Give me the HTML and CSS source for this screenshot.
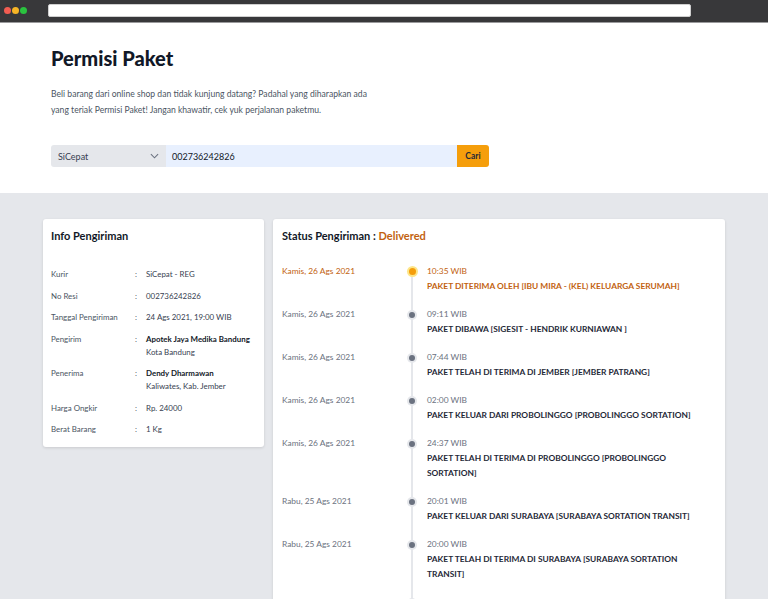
FILE: index.html
```html
<!DOCTYPE html>
<html lang="id">
<head>
<meta charset="utf-8">
<title>Permisi Paket</title>
<link rel="stylesheet" href="styles.css">
</head>
<body>
<div class="chrome">
  <div class="dots"><span class="dot red"></span><span class="dot yellow"></span><span class="dot green"></span></div>
  <div class="urlbar"></div>
</div>
<header class="hero">
  <div class="wrap hero-inner">
    <h1 class="title">Permisi Paket</h1>
    <p class="lead">Beli barang dari online shop dan tidak kunjung datang? Padahal yang diharapkan ada yang teriak Permisi Paket! Jangan khawatir, cek yuk perjalanan paketmu.</p>
    <form class="search">
      <div class="select">SiCepat
        <svg class="chev" viewBox="0 0 10 6" width="9" height="6"><path d="M1 1l4 4 4-4" fill="none" stroke="#6b7280" stroke-width="1.2"/></svg>
      </div>
      <div class="input">002736242826</div>
      <button type="button" class="btn">Cari</button>
    </form>
  </div>
</header>
<main class="content">
  <div class="wrap grid">
    <section class="card info">
      <h2 class="card-title">Info Pengiriman</h2>
      <dl class="rows">
        <div class="row"><dt>Kurir</dt><dd>SiCepat - REG</dd></div>
        <div class="row"><dt>No Resi</dt><dd>002736242826</dd></div>
        <div class="row"><dt>Tanggal Pengiriman</dt><dd>24 Ags 2021, 19:00 WIB</dd></div>
        <div class="row"><dt>Pengirim</dt><dd><b>Apotek Jaya Medika Bandung</b><br>Kota Bandung</dd></div>
        <div class="row"><dt>Penerima</dt><dd><b>Dendy Dharmawan</b><br>Kaliwates, Kab. Jember</dd></div>
        <div class="row"><dt>Harga Ongkir</dt><dd>Rp. 24000</dd></div>
        <div class="row"><dt>Berat Barang</dt><dd>1 Kg</dd></div>
      </dl>
    </section>
    <section class="card status">
      <h2 class="card-title">Status Pengiriman : <span class="accent">Delivered</span></h2>
      <ol class="timeline">
        <li class="ev active"><span class="date">Kamis, 26 Ags 2021</span><span class="mark"></span><div class="body"><span class="time">10:35 WIB</span><span class="desc">PAKET DITERIMA OLEH [IBU MIRA - (KEL) KELUARGA SERUMAH]</span></div></li>
        <li class="ev"><span class="date">Kamis, 26 Ags 2021</span><span class="mark"></span><div class="body"><span class="time">09:11 WIB</span><span class="desc">PAKET DIBAWA [SIGESIT - HENDRIK KURNIAWAN ]</span></div></li>
        <li class="ev"><span class="date">Kamis, 26 Ags 2021</span><span class="mark"></span><div class="body"><span class="time">07:44 WIB</span><span class="desc">PAKET TELAH DI TERIMA DI JEMBER [JEMBER PATRANG]</span></div></li>
        <li class="ev"><span class="date">Kamis, 26 Ags 2021</span><span class="mark"></span><div class="body"><span class="time">02:00 WIB</span><span class="desc">PAKET KELUAR DARI PROBOLINGGO [PROBOLINGGO SORTATION]</span></div></li>
        <li class="ev"><span class="date">Kamis, 26 Ags 2021</span><span class="mark"></span><div class="body"><span class="time">24:37 WIB</span><span class="desc">PAKET TELAH DI TERIMA DI PROBOLINGGO [PROBOLINGGO SORTATION]</span></div></li>
        <li class="ev"><span class="date">Rabu, 25 Ags 2021</span><span class="mark"></span><div class="body"><span class="time">20:01 WIB</span><span class="desc">PAKET KELUAR DARI SURABAYA [SURABAYA SORTATION TRANSIT]</span></div></li>
        <li class="ev"><span class="date">Rabu, 25 Ags 2021</span><span class="mark"></span><div class="body"><span class="time">20:00 WIB</span><span class="desc">PAKET TELAH DI TERIMA DI SURABAYA [SURABAYA SORTATION TRANSIT]</span></div></li>
        <li class="ev"><span class="date">Rabu, 25 Ags 2021</span><span class="mark"></span><div class="body"><span class="time">05:11 WIB</span><span class="desc">PAKET DIPROSES DI SURABAYA</span></div></li>
      </ol>
    </section>
  </div>
</main>
</body>
</html>
```

FILE: styles.css
```css
* { box-sizing: border-box; }
html, body { margin: 0; padding: 0; }
body {
  font-family: "Lato", "Open Sans", sans-serif;
  color: #1f2937;
  background: #e5e7eb;
  height: 599px;
  overflow: hidden;
}
.chrome {
  height: 23px;
  background: #38383a;
  border-bottom: 1px solid #9a9a9c;
  display: flex;
  align-items: center;
  padding: 0 0 1px 4px;
}
.dots { display: flex; gap: 1px; width: 44px; }
.dot { width: 7px; height: 7px; border-radius: 50%; display: block; }
.red { background: #f25d52; }
.yellow { background: #f6b526; }
.green { background: #2ac33f; }
.urlbar {
  width: 643px;
  height: 13px;
  background: #fff;
  border-radius: 2px;
  border: 1px solid #cfcfcf;
}
.wrap { width: 682px; margin: 0 auto; }
.hero { background: #fff; height: 170px; }
.hero-inner { padding: 23px 8px 0; }
.title {
  margin: 0;
  font-size: 20px;
  font-weight: 900;
  color: #111827;
  line-height: 24px;
}
.lead {
  margin: 16px 0 0;
  width: 330px;
  font-size: 8.6px;
  line-height: 16px;
  color: #4b5563;
}
.search { display: flex; margin-top: 27px; height: 22px; }
.select {
  width: 115px;
  background: #e5e7eb;
  border-radius: 3px 0 0 3px;
  font-size: 9px;
  color: #374151;
  display: flex;
  align-items: center;
  justify-content: space-between;
  padding: 0 7px 0 7px;
}
.input {
  width: 291px;
  background: #e8f0fe;
  font-size: 9px;
  color: #111827;
  display: flex;
  align-items: center;
  padding: 0 6px;
}
.btn {
  width: 32px;
  border: 0;
  background: #f59e0b;
  border-radius: 0 3px 3px 0;
  font-family: inherit;
  font-size: 8.5px;
  font-weight: 700;
  color: #1f2937;
  padding: 0;
}
.content { padding-top: 26px; }
.grid { display: grid; grid-template-columns: 221px 1fr; gap: 9px; align-items: start; }
.card {
  background: #fff;
  border-radius: 3px;
  box-shadow: 0 1px 3px rgba(0,0,0,.12);
  padding: 10px 8px 8px;
}
.status { padding-left: 9px; height: 400px; }
.card-title {
  margin: 0;
  font-size: 11px;
  font-weight: 700;
  line-height: 14px;
  color: #111827;
}
.accent { color: #c2620f; }
.rows { margin: 25px 0 0; }
.row {
  display: grid;
  grid-template-columns: 83px 12px 1fr;
  font-size: 7.9px;
  line-height: 13px;
  color: #4b5563;
  margin-bottom: 8.5px;
}
.row:last-child { margin-bottom: 3px; }
.row::before { content: ":"; grid-column: 2; grid-row: 1; padding-left: 1px; }
.row dt { grid-column: 1; grid-row: 1; }
.row dd { grid-column: 3; grid-row: 1; margin: 0; color: #374151; }
.row dd b { color: #111827; font-weight: 700; }
.timeline { list-style: none; margin: 21px 0 0; padding: 0; }
.ev {
  display: grid;
  grid-template-columns: 124px 21px 1fr;
  font-size: 8.4px;
  line-height: 15px;
  position: relative;
  padding-bottom: 13px;
}
.ev::after {
  content: "";
  position: absolute;
  left: 128.5px;
  top: 7px;
  bottom: -7px;
  width: 2px;
  background: #e5e7eb;
}
.date { color: #6b7280; }
.mark {
  position: relative;
  z-index: 1;
  width: 6px;
  height: 6px;
  margin: 4.5px 0 0 3px;
  border-radius: 50%;
  background: #6b7280;
  box-shadow: 0 0 0 2px #e5e7eb;
}
.active .mark {
  background: #f59e0b;
  width: 7px;
  height: 7px;
  margin: 4px 0 0 2.5px;
  box-shadow: 0 0 0 2px #fde68a;
}
.body { display: flex; flex-direction: column; padding-right: 10px; }
.time { color: #6b7280; }
.desc { font-weight: 700; color: #1f2937; }
.active .date, .active .time, .active .desc { color: #c2620f; }
```
